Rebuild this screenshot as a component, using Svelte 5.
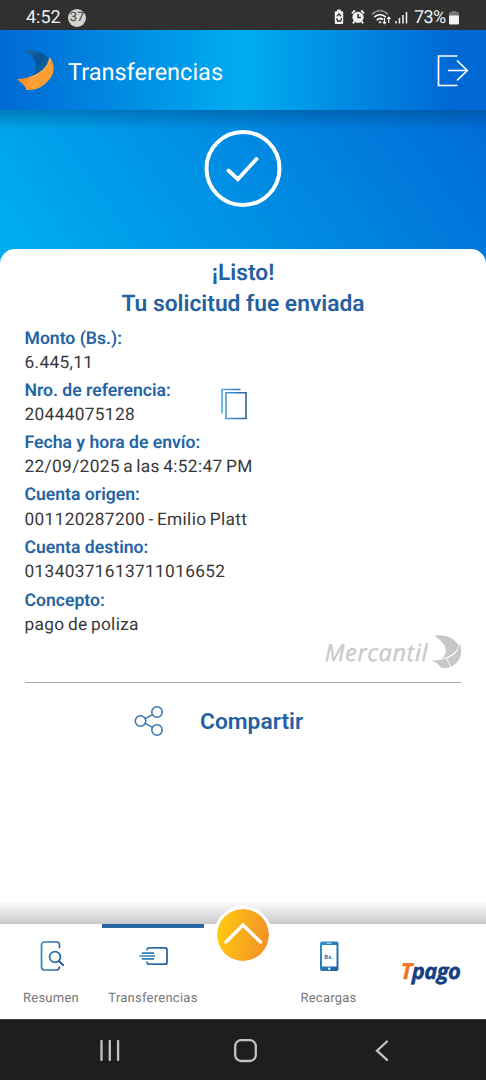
<script lang="ts">
  type Detail = { label: string; value: string; copyable?: boolean };

  const details: Detail[] = [
    { label: "Monto (Bs.):", value: "6.445,11" },
    { label: "Nro. de referencia:", value: "20444075128", copyable: true },
    { label: "Fecha y hora de envío:", value: "22/09/2025 a las 4:52:47 PM" },
    { label: "Cuenta origen:", value: "001120287200 - Emilio Platt" },
    { label: "Cuenta destino:", value: "01340371613711016652" },
    { label: "Concepto:", value: "pago de poliza" },
  ];
</script>

<div class="screen">
  <div class="status">
    <span class="status__time">4:52</span>
    <span class="status__count">37</span>
    <svg class="status__icons" width="78" height="20" viewBox="0 0 78 20">
      <path d="M4.2 3.2V1.5h3.6v1.7h1.4q1 0 1 1V15q0 1-1 1H2.800q-1 0-1-1V4.200q0-1 1-1z" fill="#f2f2f2" />
      <path d="M4 8.300l2-2.500 2 2.500M3.600 10.200l1 2.800h3l1-2.800" fill="none" stroke="#303030" stroke-width="1.300" />
      <circle cx="25" cy="9.300" r="5.600" fill="#f2f2f2" />
      <path d="M18.900 5.400l3-3M31.100 5.400l-3-3M21.400 13.400l-1.500 2M28.600 13.400l1.500 2" stroke="#f2f2f2" stroke-width="1.800" />
      <path d="M25 5.800v3.700h3" fill="none" stroke="#303030" stroke-width="1.500" />
      <path d="M39 6.300q8-7.500 16 0" fill="none" stroke="#8a8a8a" stroke-width="1.700" />
      <path d="M41.200 9.200q5.800-5.200 11.600 0M43.700 12.100q3.300-3 6.400-.4" fill="none" stroke="#f2f2f2" stroke-width="1.700" />
      <path d="M45.200 13.500h3.600L47 15.800z" fill="#f2f2f2" />
      <path d="M51.500 10v5.500M49.900 13.900l1.600 1.800 1.600-1.800M55.800 15V9.500M54.200 11l1.600-1.800 1.600 1.800" fill="none" stroke="#f2f2f2" stroke-width="1.200" />
      <path d="M63 13v2.500M66.500 10v5.500M70 7v8.500M73.500 4v11.500" stroke="#f2f2f2" stroke-width="1.500" />
    </svg>
    <span class="status__percent">73%</span>
    <svg class="status__battery" width="10" height="16" viewBox="0 0 10 16">
      <path d="M3 2V1h4v1h1.500Q10 2 10 3.500V6H0V3.500Q0 2 1.500 2z" fill="#777" />
      <path d="M0 5.500h10v7.500q0 1.500-1.500 1.500h-7Q0 14.500 0 13z" fill="#f2f2f2" />
    </svg>
  </div>

  <header class="header">
    <svg class="header__logo" width="40" height="44" viewBox="0 0 40 44">
      <defs>
        <linearGradient id="sail" x1="0" y1="0" x2="1" y2="1">
          <stop offset="0" stop-color="#1a6cab" />
          <stop offset=".5" stop-color="#075395" />
          <stop offset="1" stop-color="#1278bc" />
        </linearGradient>
        <linearGradient id="tail" x1="0" y1="0" x2="1" y2="0">
          <stop offset="0" stop-color="#ff831e" />
          <stop offset=".45" stop-color="#ffa336" />
          <stop offset="1" stop-color="#f99a2c" />
        </linearGradient>
      </defs>
      <path d="M7.500 1.800C17 1.500 28 4.500 33.500 10.500C33 18 27 25 14 29C23 22 23 12 7.500 1.800z" fill="url(#sail)" />
      <path d="M33.300 8.800C40.500 18 39 29 27 37.500C22 41 16 42.600 10.500 42C9 37.500 5 34 .8 31.300C16 30.500 33 23 33.300 8.800z" fill="url(#tail)" />
      <path d="M13 29.800Q31 24 33.800 10.500" fill="none" stroke="#ffbd62" stroke-width=".8" />
    </svg>
    <h1 class="header__title">Transferencias</h1>
    <svg class="header__exit" width="32" height="34" viewBox="0 0 32 34" fill="none" stroke="#fff" stroke-width="1.700">
      <path d="M20.500 2H1.500v29.500h19M11 16.500h19M20 6.500l10.300 10L20 26.500" />
    </svg>
  </header>

  <section class="hero">
    <svg width="78" height="78" viewBox="0 0 78 78" fill="none" stroke="#fff">
      <circle cx="39" cy="38.500" r="36.500" stroke-width="4" />
      <path d="M24.500 40.500l9.300 8.700L52.500 29" stroke-width="3.800" stroke-linecap="round" />
    </svg>
  </section>

  <main class="card">
    <h2 class="card__title">¡Listo!<br />Tu solicitud fue enviada</h2>

    <dl class="details">
      {#each details as detail}
        <div class="details__row" class:details__row--copyable={detail.copyable}>
          <div>
            <dt>{detail.label}</dt>
            <dd>{detail.value}</dd>
          </div>
          {#if detail.copyable}
            <svg width="26" height="32" viewBox="0 0 26 32" fill="none" stroke="url(#copy)" stroke-width="1.600">
              <defs>
                <linearGradient id="copy" gradientUnits="userSpaceOnUse" x1="0" y1="0" x2="26" y2="0">
                  <stop offset="0" stop-color="#4bacdc" />
                  <stop offset="1" stop-color="#24629f" />
                </linearGradient>
              </defs>
              <path d="M1 25.500V1.500h18.500" />
              <path d="M5 4.800h20v25.700H5z" />
            </svg>
          {/if}
        </div>
      {/each}
    </dl>

    <div class="brand">
      <span class="brand__name">Mercantil</span>
      <svg width="32" height="35" viewBox="0 0 32 35">
        <path d="M3.500 1.500Q22 0 27.800 12.500Q23 22 10.500 25Q22 15 3.500 1.500z" fill="#c8c8c8" />
        <path d="M28.600 9.500C33 19 28 31 18 33.500Q13 34.500 10 33.500Q7 29 .8 26.500Q27 26 28.600 9.500z" fill="#c8c8c8" />
        <path d="M15.500 24.500L20 33" fill="none" stroke="#fff" stroke-width="1" />
      </svg>
    </div>

    <button class="share" type="button">
      <svg width="30" height="32" viewBox="0 0 30 32" fill="none" stroke="#3773a8" stroke-width="1.500">
        <circle cx="6.500" cy="16" r="5.200" />
        <circle cx="23" cy="7" r="5.200" />
        <circle cx="23" cy="25" r="5.200" />
        <path d="M11.200 13.600l7.200-4M11.200 18.400l7.200 4" />
      </svg>
      <span>Compartir</span>
    </button>
  </main>

  <nav class="tabs">
    <div class="tabs__item">
      <svg width="26" height="32" viewBox="0 0 26 32" fill="none" stroke="url(#blue)" stroke-width="1.700" stroke-linecap="round">
        <defs>
          <linearGradient id="blue" gradientUnits="userSpaceOnUse" x1="0" y1="0" x2="26" y2="4">
            <stop offset="0" stop-color="#3295c9" />
            <stop offset="1" stop-color="#255f9d" />
          </linearGradient>
        </defs>
        <path d="M21.500 7.500V5q0-3-3-3h-12q-3 0-3 3v22q0 3 3 3h12q2.800 0 3-3" />
        <circle cx="17" cy="17" r="5.400" />
        <path d="M21 21l4 4" stroke-width="2.200" />
      </svg>
      <span>Resumen</span>
    </div>
    <div class="tabs__item tabs__item--active">
      <svg width="30" height="32" viewBox="-1 0 30 32" fill="none" stroke="url(#send)" stroke-width="1.700" stroke-linecap="round">
        <defs>
          <linearGradient id="send" gradientUnits="userSpaceOnUse" x1="0" y1="0" x2="30" y2="0">
            <stop offset="0" stop-color="#3688bd" />
            <stop offset="1" stop-color="#245b98" />
          </linearGradient>
        </defs>
        <path d="M8 9.800q0-2 2-2h16q2 0 2 2v12.400q0 2-2 2H10q-2 0-2-2" />
        <path d="M3.500 13.200h11M1 16h14.500M3.500 18.900h11" />
      </svg>
      <span>Transferencias</span>
    </div>
    <button class="tabs__toggle" type="button" aria-label="Menú">
      <svg width="52" height="52" viewBox="0 0 52 52" fill="none" stroke="#fff" stroke-width="3.500" stroke-linecap="round">
        <path d="M9 33L26 16l17.500 17" />
      </svg>
    </button>
    <div class="tabs__item">
      <svg width="20" height="32" viewBox="0 0 20 32">
        <defs>
          <linearGradient id="phone" x1="0" y1="0" x2="1" y2="1">
            <stop offset="0" stop-color="#2f95cd" />
            <stop offset="1" stop-color="#20609f" />
          </linearGradient>
        </defs>
        <rect x="1" y="1.500" width="18.500" height="29.500" rx="2" fill="url(#phone)" />
        <path d="M3 5h14.500v21.500H3z" fill="#fff" />
        <path d="M7.500 3.200h5" stroke="#c6e1f0" />
        <circle cx="10.200" cy="28.700" r="1.200" fill="#fff" />
        <text x="5.300" y="18.500" class="phone-text">Bs.</text>
      </svg>
      <span>Recargas</span>
    </div>
    <div class="tabs__item tabs__item--tpago"><b><i>T</i>pago</b></div>
  </nav>

  <div class="system">
    <svg width="22" height="24" viewBox="0 0 22 24" stroke="#c2c2c2" stroke-width="2.300" stroke-linecap="round">
      <path d="M2.500 2v19M10.800 2v19M19.100 2v19" />
    </svg>
    <svg width="24" height="24" viewBox="0 0 24 24" fill="none" stroke="#c2c2c2" stroke-width="2.300">
      <rect x="1.200" y="1.200" width="20.600" height="20.800" rx="6" />
    </svg>
    <svg width="14" height="24" viewBox="0 0 14 24" fill="none" stroke="#c2c2c2" stroke-width="2.300" stroke-linecap="round">
      <path d="M12 2.500L2 11.700l10 9.200" />
    </svg>
  </div>
</div>

<style>
  :global(body) {
    margin: 0;
  }

  .screen {
    display: flex;
    flex-direction: column;
    width: 486px;
    height: 1080px;
    overflow: hidden;

    color: #383838;
    font-family: Roboto, sans-serif;
    background: #fff;
    text-rendering: geometricPrecision;
  }

  svg {
    display: block;
    flex: none;
  }

  button {
    padding: 0;
    border: 0;
    font: inherit;
    cursor: pointer;
  }

  .status {
    display: flex;
    align-items: center;
    flex: none;
    height: 30px;
    padding: 5px 26px 0;
    box-sizing: border-box;

    color: #f0f0f0;
    background: #303030;
  }

  .status__time {
    width: 35px;
    font-size: 18px;
  }

  .status__count {
    width: 18px;
    height: 18px;
    margin-left: 7px;

    color: #444;
    font-size: 13px;
    line-height: 18px;
    text-align: center;
    border-radius: 50%;
    background: #d2d2d2;
  }

  .status__icons {
    margin-left: 247px;
  }

  .status__percent {
    width: 33px;
    margin-left: 3px;
    font-size: 18px;
    letter-spacing: -0.6px;
  }

  .status__battery {
    margin-left: 2px;
  }

  .header {
    display: flex;
    align-items: center;
    flex: none;
    height: 80px;
    padding: 0 17px 0 16px;
    box-sizing: border-box;

    background: linear-gradient(90deg, #0069d5 0%, #00adf0 50%, #0068d4 93%);
  }

  .header__title {
    flex: 1;
    margin: 4px 0 0 12px;

    color: #fff;
    font-size: 23.5px;
    font-weight: 400;
  }

  .header__exit {
    margin-top: 2px;
  }

  .hero {
    display: flex;
    justify-content: center;
    flex: none;
    height: 155px;
    padding-top: 20px;
    box-sizing: border-box;

    background:
      linear-gradient(rgba(0, 50, 90, 0.32), rgba(0, 50, 90, 0) 20px),
      linear-gradient(55deg, #00adf0 4%, #006bd6 100%);
  }

  .card {
    z-index: 1;
    flex: 1;
    margin-top: -16px;
    padding: 8px 25px 0;

    border-radius: 15px 15px 0 0;
    background: linear-gradient(to top, #c9c9c9, #fff 23px);
  }

  .card__title {
    margin: 0;

    color: #2561a0;
    font-size: 22.8px;
    font-weight: 600;
    line-height: 31px;
    text-align: center;
  }

  .details {
    display: flex;
    flex-direction: column;
    margin: 6px 0 0 -0.5px;

    font-size: 17.3px;
    line-height: 24.3px;
  }

  .details__row {
    display: flex;
    align-items: center;
    height: 52.7px;
  }

  .details__row--copyable {
    height: 51px;
  }

  .details__row--copyable > div {
    width: 196px;
  }

  .details__row--copyable > svg {
    margin-top: 2px;
  }

  dt {
    color: #2464a5;
    font-size: 17.6px;
    font-weight: 600;
  }

  dd {
    margin: 0;
    letter-spacing: 0.33px;
    word-spacing: -1.2px;
  }

  .brand {
    display: flex;
    justify-content: flex-end;
    align-items: center;
    height: 46px;
    padding-bottom: 16px;
    margin: -2px 0 0;
    box-sizing: border-box;

    border-bottom: 1px solid #aaa;
  }

  .brand__name {
    margin-right: 3px;

    color: #cacaca;
    font-family: "Open Sans", sans-serif;
    font-size: 23.5px;
    font-style: italic;
    font-weight: 500;
    letter-spacing: 0.6px;
    -webkit-text-stroke: 0.4px;
  }

  .brand svg {
    margin-right: -2px;
  }

  .share {
    display: flex;
    align-items: center;
    gap: 36px;
    margin: 22px 0 0 109px;

    color: #2561a0;
    font-size: 22.8px;
    font-weight: 600;
    background: none;
  }

  .tabs {
    z-index: 2;
    display: grid;
    grid-template-columns: 102px 102px 78px 93px 1fr;
    flex: none;
    height: 95px;

    background: #fff;
  }

  .tabs__item {
    display: flex;
    flex-direction: column;
    align-items: center;
    gap: 19px;
    padding-top: 16px;

    color: #777;
    font-size: 13px;
    letter-spacing: 0.25px;
  }

  .tabs__item--active {
    padding-top: 12px;
    border-top: 4px solid #2a65a4;
  }

  .tabs__item--tpago {
    padding-top: 32px;

    color: #153f82;
    font-family: "Open Sans", sans-serif;
    font-size: 22px;
    font-style: italic;
    letter-spacing: -0.6px;
  }

  .tabs__item--tpago b {
    font-weight: 700;
    -webkit-text-stroke: 0.4px;
  }

  .tabs__item--tpago i {
    color: #ee7623;
  }

  .phone-text {
    fill: #2a78b5;
    font-size: 6px;
    font-weight: 700;
    letter-spacing: 0;
  }

  .tabs__toggle {
    justify-self: center;
    width: 58px;
    height: 58px;
    margin-top: -18px;

    border: 3px solid #fff;
    border-radius: 50%;
    background: linear-gradient(100deg, #ffcd0c, #f28d2b) padding-box;
  }

  .system {
    display: flex;
    align-items: center;
    flex: none;
    gap: 113px;
    height: 61px;
    padding: 2px 0 0 99px;
    box-sizing: border-box;

    border-top: 1px solid #444;
    background: #1e1e1e;
  }

  .system svg:last-child {
    margin-left: 4px;
  }
</style>
